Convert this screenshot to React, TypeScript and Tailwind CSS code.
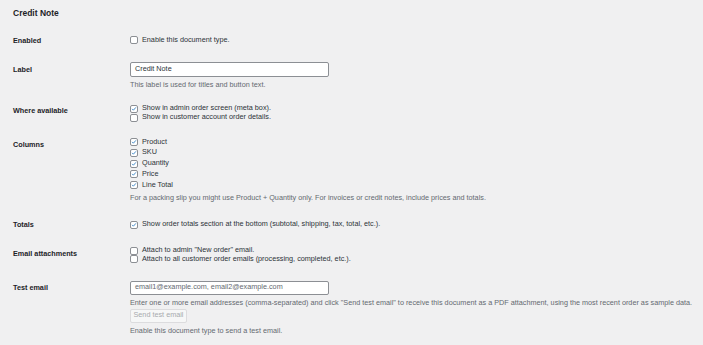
import React from 'react';

const Check = ({ checked }: { checked?: boolean }) => (
  <span className="inline-flex w-[8px] h-[8px] shrink-0 items-center justify-center rounded-[2px] border border-[#8c8f94] bg-white">
    {checked && (
      <svg viewBox="0 0 20 20" className="w-[10px] h-[10px]">
        <path d="M4.5 10.5l3.5 3.5L15.5 5.5" fill="none" stroke="#3582c4" strokeWidth="3" strokeLinecap="round" strokeLinejoin="round" />
      </svg>
    )}
  </span>
);

const CheckRow = ({ checked, text, h }: { checked?: boolean; text: string; h: string }) => (
  <label className={`flex items-center gap-[4px] ${h}`}>
    <Check checked={checked} />
    <span className="text-[#2c3338]">{text}</span>
  </label>
);

const Label = ({ children, pt = '' }: { children: React.ReactNode; pt?: string }) => (
  <div className={`w-[117px] shrink-0 font-semibold text-[#1d2327] leading-[9px] ${pt}`}>{children}</div>
);

const Help = ({ children, mt }: { children: React.ReactNode; mt: string }) => (
  <p className={`leading-[9px] text-[#646970] ${mt}`}>{children}</p>
);

export default function App() {
  return (
    <div className="min-h-[345px] w-[703px] bg-[#f0f0f1] pl-[13px] pt-[8px] text-[7.25px] font-['Liberation_Sans',Arial,sans-serif] text-[#3c434a]">
      <h2 className="text-[8.5px] leading-[10px] font-semibold text-[#1d2327]">Credit Note</h2>

      {/* Enabled */}
      <div className="flex mt-[17.5px]">
        <Label>Enabled</Label>
        <CheckRow text="Enable this document type." h="h-[9px]" />
      </div>

      {/* Label */}
      <div className="flex mt-[17.5px]">
        <Label pt="pt-[3px]">Label</Label>
        <div>
          <div className="flex h-[15px] w-[199px] items-center rounded-[2px] border border-[#8c8f94] bg-white px-[4px] text-[#2c3338]">
            Credit Note
          </div>
          <Help mt="mt-[2.5px]">This label is used for titles and button text.</Help>
        </div>
      </div>

      {/* Where available */}
      <div className="flex mt-[16px]">
        <Label pt="pt-[1.5px]">Where available</Label>
        <div>
          <CheckRow checked text="Show in admin order screen (meta box)." h="h-[8.7px]" />
          <CheckRow text="Show in customer account order details." h="h-[8.7px]" />
        </div>
      </div>

      {/* Columns */}
      <div className="flex mt-[15px]">
        <Label pt="pt-[3px]">Columns</Label>
        <div>
          {['Product', 'SKU', 'Quantity', 'Price', 'Line Total'].map(c => (
            <CheckRow key={c} checked text={c} h="h-[10.7px]" />
          ))}
          <Help mt="mt-[3px]">
            For a packing slip you might use Product + Quantity only. For invoices or credit notes, include prices and totals.
          </Help>
        </div>
      </div>

      {/* Totals */}
      <div className="flex mt-[18px]">
        <Label>Totals</Label>
        <CheckRow checked text="Show order totals section at the bottom (subtotal, shipping, tax, total, etc.)." h="h-[9px]" />
      </div>

      {/* Email attachments */}
      <div className="flex mt-[17px]">
        <Label pt="pt-[2.5px]">Email attachments</Label>
        <div>
          <CheckRow text={'Attach to admin "New order" email.'} h="h-[8.7px]" />
          <CheckRow text="Attach to all customer order emails (processing, completed, etc.)." h="h-[8.7px]" />
        </div>
      </div>

      {/* Test email */}
      <div className="flex mt-[17px]">
        <Label pt="pt-[2.5px]">Test email</Label>
        <div>
          <div className="flex h-[14px] w-[199px] items-center rounded-[2px] border border-[#8c8f94] bg-white px-[4px] text-[#646970]">
            email1@example.com, email2@example.com
          </div>
          <Help mt="mt-[3px]">
            Enter one or more email addresses (comma-separated) and click "Send test email" to receive this document as a PDF attachment, using the most recent order as sample data.
          </Help>
          <button className="mt-[2px] flex h-[14px] w-[57px] items-center justify-center rounded-[2px] border border-[#dcdcde] bg-[#f6f7f7] text-[#a7aaad]">
            Send test email
          </button>
          <Help mt="mt-[3.5px]">Enable this document type to send a test email.</Help>
        </div>
      </div>
    </div>
  );
}
